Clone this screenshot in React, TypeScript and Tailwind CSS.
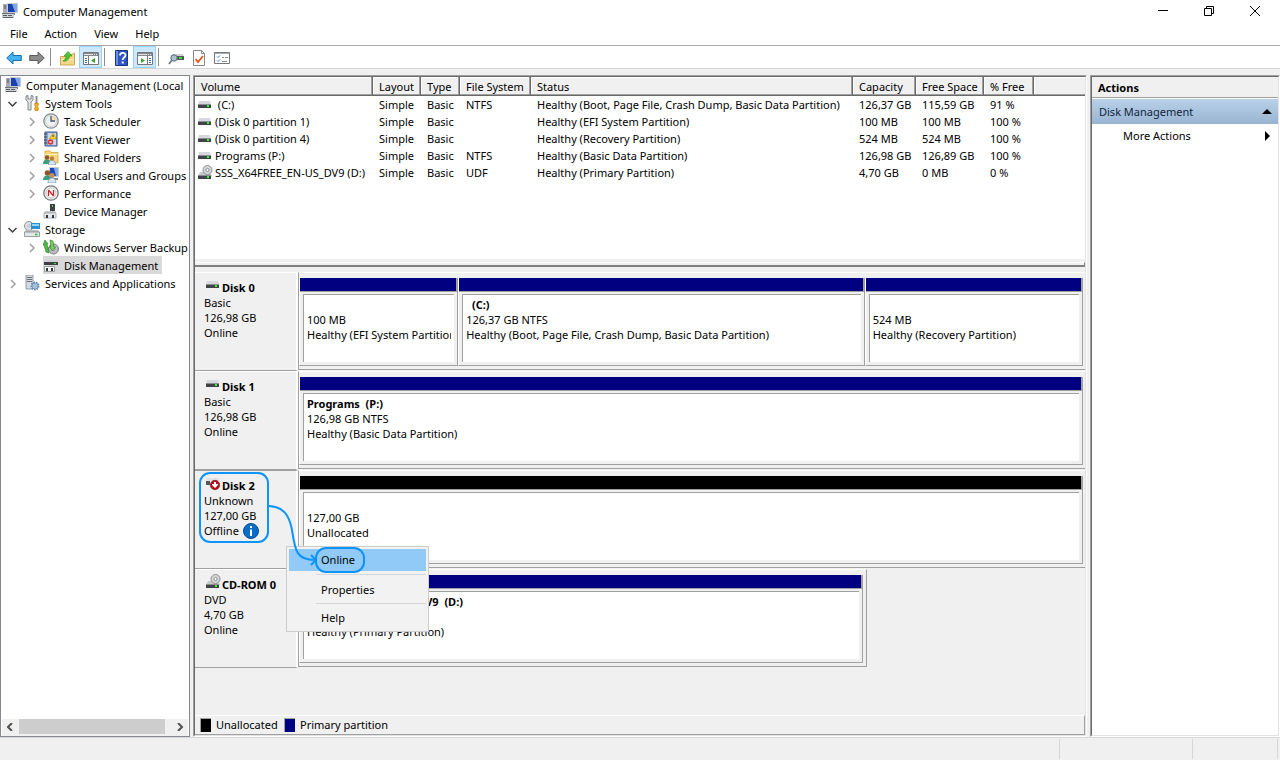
import { ReactNode } from "react"

type Kind = "drive" | "cd" | "offline"

interface IVolume {
    icon: Kind
    name: string
    fs: string
    status: string
    capacity: string
    free: string
    percent: string
}

interface IPartition {
    title?: string
    lines: string[]
    grow: number
    unallocated?: boolean
}

interface IDisk {
    icon: Kind
    name: string
    info: string[]
    partitions: IPartition[]
}

const volumes: IVolume[] = [
    { icon: "drive", name: " (C:)", fs: "NTFS", status: "Healthy (Boot, Page File, Crash Dump, Basic Data Partition)", capacity: "126,37 GB", free: "115,59 GB", percent: "91 %" },
    { icon: "drive", name: "(Disk 0 partition 1)", fs: "", status: "Healthy (EFI System Partition)", capacity: "100 MB", free: "100 MB", percent: "100 %" },
    { icon: "drive", name: "(Disk 0 partition 4)", fs: "", status: "Healthy (Recovery Partition)", capacity: "524 MB", free: "524 MB", percent: "100 %" },
    { icon: "drive", name: "Programs (P:)", fs: "NTFS", status: "Healthy (Basic Data Partition)", capacity: "126,98 GB", free: "126,89 GB", percent: "100 %" },
    { icon: "cd", name: "SSS_X64FREE_EN-US_DV9 (D:)", fs: "UDF", status: "Healthy (Primary Partition)", capacity: "4,70 GB", free: "0 MB", percent: "0 %" },
]

const disks: IDisk[] = [
    {
        icon: "drive",
        name: "Disk 0",
        info: ["Basic", "126,98 GB", "Online"],
        partitions: [
            { lines: ["100 MB", "Healthy (EFI System Partition)"], grow: 157 },
            { title: "  (C:)", lines: ["126,37 GB NTFS", "Healthy (Boot, Page File, Crash Dump, Basic Data Partition)"], grow: 404 },
            { lines: ["524 MB", "Healthy (Recovery Partition)"], grow: 216 },
        ],
    },
    {
        icon: "drive",
        name: "Disk 1",
        info: ["Basic", "126,98 GB", "Online"],
        partitions: [{ title: "Programs  (P:)", lines: ["126,98 GB NTFS", "Healthy (Basic Data Partition)"], grow: 1 }],
    },
    {
        icon: "offline",
        name: "Disk 2",
        info: ["Unknown", "127,00 GB", "Offline"],
        partitions: [{ lines: ["127,00 GB", "Unallocated"], grow: 1, unallocated: true }],
    },
    {
        icon: "cd",
        name: "CD-ROM 0",
        info: ["DVD", "4,70 GB", "Online"],
        partitions: [{ title: "SSS_X64FREE_EN-US_DV9  (D:)", lines: ["4,70 GB UDF", "Healthy (Primary Partition)"], grow: 1 }],
    },
]

function Svg({ children, size = "size-4" }: { children: ReactNode; size?: string }) {
    return (
        <svg viewBox="0 0 16 16" className={"shrink-0 " + size} aria-hidden="true">
            {children}
        </svg>
    )
}

function ComputerIcon() {
    return (
        <Svg>
            <path d="M5 0h11v10H5z" fill="#c9ccd2" />
            <path d="M6 1h9v8H6z" fill="#1b3fae" />
            <path d="M10 1h5v8h-2z" fill="#7fa6e8" />
            <path d="M1 1h4v9H1z" fill="#a9adb3" />
            <path d="M2 3h2M2 5h2" stroke="#4c5158" />
            <path d="M8 10h5v2H8z" fill="#7b8088" />
            <path d="M0 10h12v5H0z" fill="#cdd0d4" />
            <path d="M0 10h12v1H0z" fill="#6d7278" />
            <path d="M1 12.5h4M6 12.5h4M1 14.5h10" stroke="#585d63" />
        </Svg>
    )
}

function DriveIcon({ kind }: { kind: Kind }) {
    return (
        <Svg>
            {kind === "cd" && (
                <>
                    <path d="M2 7h10l2 4H0z" fill="#c6c9cc" />
                    <circle cx="9.5" cy="5" r="4.5" fill="#d5d7d8" stroke="#8e9294" />
                    <circle cx="9.5" cy="5" r="1.6" fill="#fff" stroke="#8e9294" />
                    <path d="M0 10h13v4H0z" fill="#3f4347" />
                    <path d="M0 10.500h13" stroke="#8b8f93" />
                    <path d="M9 12h2" stroke="#3bf03b" strokeWidth="2" />
                </>
            )}
            {kind === "drive" && (
                <>
                    <path d="M1 4h11l1 4H0z" fill="#d6d8dd" />
                    <path d="M0 7h13v4H0z" fill="#3f4347" />
                    <path d="M0 7.500h13" stroke="#8b8f93" />
                    <path d="M9 9h2" stroke="#3bf03b" strokeWidth="2" />
                </>
            )}
            {kind === "offline" && (
                <>
                    <path d="M0 3h13v3H0z" fill="#e0e2e5" />
                    <path d="M0 6h4v4H0z" fill="#55595c" />
                    <circle cx="9" cy="10" r="4.700" fill="#b1101c" stroke="#7d0710" strokeWidth=".6" />
                    <path d="M8 7h2v2h2v1l-3 3-3-3V9h2z" fill="#fff" />
                </>
            )}
        </Svg>
    )
}

function ToolsIcon() {
    return (
        <Svg>
            <path d="M2 1v4l2 2v8h3V7l2-2V1L7 .5V4H4V.5z" fill="#e2e4e6" stroke="#777b80" strokeWidth=".9" />
            <path d="M11.500 1h2v7h-2z" fill="#8b9095" />
            <path d="M11 8h3l.5 2-1 1 1 3-1 2h-2l-1-2 1-3-1-1z" fill="#f2b01c" stroke="#a87408" strokeWidth=".6" />
        </Svg>
    )
}

function ClockIcon() {
    return (
        <Svg>
            <circle cx="8" cy="8" r="7.200" fill="#eef0f2" stroke="#8a8d90" strokeWidth="1.300" />
            <path d="M8 8V2.500A5.500 5.500 0 0 1 13.500 8z" fill="#f5dfa5" />
            <circle cx="8" cy="8" r="5.500" fill="none" stroke="#c0c5ca" strokeWidth=".7" />
            <path d="M8 3v5h4" fill="none" stroke="#3c5b80" strokeWidth="1.300" />
        </Svg>
    )
}

function EventIcon() {
    return (
        <Svg>
            <path d="M2 1h12v14H2z" fill="#8aa8d6" stroke="#41598a" />
            <path d="M5 2h8v12H5z" fill="#c7d8f0" />
            <path d="M1 3h3M1 6h3M1 9h3M1 12h3" stroke="#444" />
            <path d="M10 2l3.500 6h-7z" fill="#ffdc20" stroke="#b48a00" strokeWidth=".6" />
            <path d="M10 4v2" stroke="#333" />
            <circle cx="7.500" cy="11" r="2.800" fill="#d93640" />
            <path d="M6.500 10l2 2M8.500 10l-2 2" stroke="#fff" strokeWidth=".8" />
        </Svg>
    )
}

function SharedIcon() {
    return (
        <Svg>
            <path d="M2 2h5l1 1.500h7V14H2z" fill="#f8d777" stroke="#c99b35" strokeWidth=".7" />
            <path d="M2 5.500h13" stroke="#fff0b5" />
            <circle cx="4" cy="8.500" r="2.200" fill="#8a5a2c" />
            <path d="M0 15c0-3 1.500-4.500 4-4.500S8 12 8 15z" fill="#3b9d7c" />
            <circle cx="9" cy="9.500" r="2.200" fill="#b67c4a" />
            <path d="M5.500 16c0-3 1.200-4.500 3.500-4.500s3.500 1.500 3.500 4.500z" fill="#d9e6f5" stroke="#5b7fb0" strokeWidth=".6" />
        </Svg>
    )
}

function UsersIcon() {
    return (
        <Svg>
            <path d="M6 0h10v10H6z" fill="#c9ccd2" />
            <path d="M7 1h8v8H7z" fill="#1b4bb8" />
            <path d="M11 1h4v8h-2z" fill="#86adeb" />
            <path d="M11 11h4v2h-4z" fill="#888" />
            <circle cx="4.500" cy="6" r="2.800" fill="#8a5a2c" />
            <path d="M0 13c0-3 1.500-4.500 4.500-4.500S9 10 9 13z" fill="#3b9d7c" />
            <circle cx="9" cy="8.500" r="2.500" fill="#c48d5c" />
            <path d="M5 16c0-3.500 1.200-5 4-5s4 1.500 4 5z" fill="#d9e6f5" stroke="#5b7fb0" strokeWidth=".6" />
        </Svg>
    )
}

function PerformanceIcon() {
    return (
        <Svg>
            <circle cx="8" cy="8" r="7.200" fill="#f4f4f4" stroke="#77797b" strokeWidth="1.300" />
            <circle cx="8" cy="8" r="5" fill="#fff" stroke="#aaa" strokeWidth=".7" />
            <path d="M5.500 11V5.500M10.500 10.500V5M5.500 5l5 6" stroke="#d0202a" strokeWidth="1.300" />
        </Svg>
    )
}

function DeviceIcon() {
    return (
        <Svg>
            <path d="M7 1h5v8H7z" fill="#3d4145" />
            <path d="M9.500 2v2" stroke="#42e042" />
            <path d="M2 8h10l1 2H1z" fill="#c7cacd" />
            <path d="M1 10h12v5H1z" fill="#e8eaeb" stroke="#9a9da0" strokeWidth=".8" />
            <path d="M3 12h2v3H3zM9 12h2v3H9z" fill="#33363a" />
        </Svg>
    )
}

function StorageIcon() {
    return (
        <Svg>
            <circle cx="5" cy="5" r="4.500" fill="#dfe2e4" stroke="#8e9294" />
            <circle cx="5" cy="5" r="1.300" fill="#fff" stroke="#999" strokeWidth=".7" />
            <path d="M7 2h9v6H7z" fill="#2b8fd0" />
            <path d="M8 3h7v2H8z" fill="#8fd3f5" />
            <path d="M2 9h12l1.500 2h-15z" fill="#b9bcbf" />
            <path d="M.5 11h15v4.500H.5z" fill="#e3e5e6" stroke="#85898c" strokeWidth=".8" />
            <path d="M11 13.500h2.500" stroke="#25c025" strokeWidth="1.500" />
        </Svg>
    )
}

function BackupIcon() {
    return (
        <Svg>
            <circle cx="10.500" cy="10" r="5" fill="#b9bcc2" stroke="#777a80" />
            <circle cx="10.500" cy="10" r="1.500" fill="#f1f1f1" stroke="#777" strokeWidth=".6" />
            <path d="M3 13L1 6 0 6l2-5 3 4H4l2 9z" fill="#4fbb45" stroke="#257a20" strokeWidth=".6" />
            <path d="M7 1l3 1 1 6h1.500l-3 4-3-4H8z" fill="#76d060" stroke="#257a20" strokeWidth=".6" />
        </Svg>
    )
}

function DiskMgmtIcon() {
    return (
        <Svg>
            <path d="M2 3h12l1 2H1z" fill="#cfd1d4" />
            <path d="M1 5h14v3H1z" fill="#3d4145" />
            <path d="M11 6.500h2" stroke="#42e042" />
            <path d="M1.500 9.500h10v5h-10z" fill="#f6f7f8" stroke="#9a9da0" />
            <path d="M3 11h2v3H3zM8 11h2v3H8z" fill="#33363a" />
        </Svg>
    )
}

function ServicesIcon() {
    return (
        <Svg>
            <path d="M2 0h7v14H2z" fill="#d5dbe1" stroke="#7d8791" strokeWidth=".8" />
            <path d="M3 2.500h5M3 4.500h5M3 6.500h5" stroke="#65707b" />
            <circle cx="11" cy="11" r="3.600" fill="#b7d0e8" stroke="#5c86b0" strokeWidth="1.800" strokeDasharray="1.500 1" />
            <circle cx="11" cy="11" r="3" fill="#b7d0e8" stroke="#5c86b0" strokeWidth=".7" />
            <circle cx="11" cy="11" r="1.200" fill="#fff" stroke="#5c86b0" strokeWidth=".7" />
        </Svg>
    )
}

function ArrowIcon({ back }: { back?: boolean }) {
    return (
        <Svg>
            {back ? (
                <path d="M.7 8L7 2v3.500h8.300v5H7V14z" fill="#43b2ee" stroke="#1b6fae" />
            ) : (
                <path d="M15.300 8L9 2v3.500H.7v5H9V14z" fill="#8b8b8b" stroke="#5c5c5c" />
            )}
        </Svg>
    )
}

function FolderUpIcon() {
    return (
        <Svg>
            <path d="M.500 6.500h5l1-2h6l1-1.500h1v12H.500z" fill="#f4d789" stroke="#c7a04c" strokeWidth=".9" />
            <path d="M1 9.500h13" stroke="#fbe9b5" />
            <path d="M3 11c2-1 3-3 3-5H4l4-4.500L12 6H9.500c0 3-3 6-6.500 5z" fill="#4fc332" stroke="#2c8f20" strokeWidth=".6" />
        </Svg>
    )
}

function PaneIcon({ flip }: { flip?: boolean }) {
    return (
        <Svg>
            <path d="M.5 2.500h15v12H.5z" fill="#fff" stroke="#75787b" />
            <path d="M1 3h14v3H1z" fill="#85898c" />
            <path d="M1 4.500h9M11 4.500h1M13 4.500h1" stroke="#e5e5e5" />
            {flip ? (
                <>
                    <path d="M10.500 6v8.500" stroke="#75787b" />
                    <path d="M12 8.500h2M12 10.500h2M12 12.500h2" stroke="#3f6e9c" />
                    <path d="M4 8v5l4-2.500z" fill="#3da32c" />
                </>
            ) : (
                <>
                    <path d="M5.500 6v8.500" stroke="#75787b" />
                    <path d="M2 8.500h2M2 10.500h2M2 12.500h2" stroke="#3f6e9c" />
                    <path d="M12 8v5l-4-2.500z" fill="#3da32c" />
                </>
            )}
        </Svg>
    )
}

function HelpIcon() {
    return (
        <Svg>
            <path d="M1.500.5h12v15h-12z" fill="#2d55c2" stroke="#1b3585" />
            <path d="M2 1h2v14H2z" fill="#6f8fe0" />
            <path d="M6 5.500C6 2 11.500 2 11.500 5.200c0 2.300-2.800 2.300-2.800 4.800" fill="none" stroke="#fff" strokeWidth="1.800" />
            <path d="M7.700 11.500h2v2h-2z" fill="#fff" />
        </Svg>
    )
}

function InspectIcon() {
    return (
        <Svg>
            <path d="M4 4h11l1 3H3z" fill="#d0d2d5" />
            <path d="M3 6h13v4H3z" fill="#54585c" />
            <path d="M11 8h3" stroke="#38e038" strokeWidth="2" />
            <path d="M4 10L1 14" stroke="#777b80" strokeWidth="1.800" />
            <circle cx="6" cy="8" r="3.200" fill="#a9c0cf" stroke="#5f6a73" />
        </Svg>
    )
}

function CheckDocIcon() {
    return (
        <Svg>
            <path d="M2.500.5h8l3 3v12h-11z" fill="#fff" stroke="#85888b" />
            <path d="M10.500.5v3h3" fill="none" stroke="#85888b" />
            <path d="M4.500 9l2.500 3 5-6" fill="none" stroke="#e8541d" strokeWidth="1.800" />
        </Svg>
    )
}

function ListIcon() {
    return (
        <Svg>
            <path d="M.5 2.500h15v11H.5z" fill="#fff" stroke="#75787b" />
            <path d="M1 3.500h14" stroke="#a9acaf" />
            <path d="M3 6.500l1 1 2-2M3 10.500l1 1 2-2" fill="none" stroke="#2f7fd0" />
            <path d="M8 7.500h2M11 7.500h3M8 11.500h5" stroke="#8a8d90" />
        </Svg>
    )
}

function Chevron({ open }: { open?: boolean }) {
    return (
        <svg viewBox="0 0 11 11" className="size-[11px] shrink-0" fill="none" strokeWidth="1.500" aria-hidden="true">
            {open ? <path d="M1.500 4l4 4 4-4" stroke="#404040" /> : <path d="M4 2l4 4-4 4" stroke="#a0a0a0" />}
        </svg>
    )
}

const tree: { label: string; icon: ReactNode; level: number; state?: "open" | "closed"; selected?: boolean }[] = [
    { label: "System Tools", icon: <ToolsIcon />, level: 1, state: "open" },
    { label: "Task Scheduler", icon: <ClockIcon />, level: 2, state: "closed" },
    { label: "Event Viewer", icon: <EventIcon />, level: 2, state: "closed" },
    { label: "Shared Folders", icon: <SharedIcon />, level: 2, state: "closed" },
    { label: "Local Users and Groups", icon: <UsersIcon />, level: 2, state: "closed" },
    { label: "Performance", icon: <PerformanceIcon />, level: 2, state: "closed" },
    { label: "Device Manager", icon: <DeviceIcon />, level: 2 },
    { label: "Storage", icon: <StorageIcon />, level: 1, state: "open" },
    { label: "Windows Server Backup", icon: <BackupIcon />, level: 2, state: "closed" },
    { label: "Disk Management", icon: <DiskMgmtIcon />, level: 2, selected: true },
    { label: "Services and Applications", icon: <ServicesIcon />, level: 1, state: "closed" },
]

function Sunken({ children, className }: { children: ReactNode; className: string }) {
    return (
        <div className={"flex border border-t-[#a0a0a0] border-l-[#a0a0a0] border-r-white border-b-white " + className}>
            <div className="flex min-w-0 flex-1 flex-col border border-t-[#696969] border-l-[#696969] border-r-[#e3e3e3] border-b-[#e3e3e3]">
                {children}
            </div>
        </div>
    )
}

function TitleBar() {
    return (
        <header className="flex h-6 items-center bg-white pb-0.5 pl-0.5">
            <ComputerIcon />
            <h1 className="flex-1 pl-[5px]">Computer Management</h1>
            <div className="flex pr-0.5">
                <button aria-label="Minimize" className="flex h-5 w-[46px] items-center justify-center">
                    <svg viewBox="0 0 10 10" className="size-2.5" stroke="#000"><path d="M0 4.500h10" /></svg>
                </button>
                <button aria-label="Restore" className="flex h-5 w-[46px] items-center justify-center">
                    <svg viewBox="0 0 10 10" className="size-2.5" fill="none" stroke="#000"><path d="M.5 2.500h7v7h-7zM2.500 2.500v-2h7v7h-2" /></svg>
                </button>
                <button aria-label="Close" className="flex h-5 w-[46px] items-center justify-center">
                    <svg viewBox="0 0 10 10" className="size-2.5" stroke="#000"><path d="M0 0l10 10M10 0L0 10" /></svg>
                </button>
            </div>
        </header>
    )
}

function ToolButton({ label, on, children }: { label: string; on?: boolean; children: ReactNode }) {
    return (
        <button
            aria-label={label}
            className={"flex h-[22px] w-[23px] items-center justify-center border pt-0.5 " + (on ? "border-[#99d1ff] bg-[#cce8ff]" : "border-transparent")}
        >
            {children}
        </button>
    )
}

function Separator() {
    return <div className="mr-[5px] ml-0.5 h-[18px] w-px bg-[#8d8d8d]"></div>
}

function Toolbar() {
    return (
        <div className="flex h-6 items-center border-y border-t-[#a8a8ae] border-b-[#d5d5d5] bg-white pl-0.5">
            <ToolButton label="Back"><ArrowIcon back /></ToolButton>
            <ToolButton label="Forward"><ArrowIcon /></ToolButton>
            <Separator />
            <ToolButton label="Up One Level"><FolderUpIcon /></ToolButton>
            <ToolButton label="Show/Hide Console Tree" on><PaneIcon /></ToolButton>
            <Separator />
            <ToolButton label="Help"><HelpIcon /></ToolButton>
            <ToolButton label="Show/Hide Action Pane" on><PaneIcon flip /></ToolButton>
            <Separator />
            <ToolButton label="Rescan Disks"><InspectIcon /></ToolButton>
            <ToolButton label="Properties"><CheckDocIcon /></ToolButton>
            <ToolButton label="Settings"><ListIcon /></ToolButton>
        </div>
    )
}

function Tree() {
    return (
        <aside className="flex w-[190px] shrink-0 flex-col border border-[#828790] bg-white px-px">
            <ul className="flex-1 overflow-hidden whitespace-nowrap">
                <li className="flex h-[18px] items-center pl-[3px]">
                    <ComputerIcon />
                    <span className="pl-[5px]">Computer Management (Local</span>
                </li>
                {tree.map((item) => (
                    <li key={item.label} className={"flex h-[18px] items-center " + (item.level === 1 ? "pl-[5px]" : "pl-6")}>
                        <span className="w-[17px] shrink-0">{item.state && <Chevron open={item.state === "open"} />}</span>
                        <button className={"flex h-[18px] items-center " + (item.selected ? "bg-[#d9d9d9]" : "")}>
                            {item.icon}
                            <span className="pr-1 pl-[5px]">{item.label}</span>
                        </button>
                    </li>
                ))}
            </ul>
            <div className="flex h-[17px] bg-[#f0f0f0] pb-0.5">
                <button aria-label="Scroll left" className="flex w-[17px] items-center justify-center">
                    <svg viewBox="0 0 8 8" className="size-2" fill="none" stroke="#505050" strokeWidth="2"><path d="M5 0L1 4l4 4" /></svg>
                </button>
                <div className="flex-1 pr-1.5"><div className="h-full bg-[#cdcdcd]"></div></div>
                <button aria-label="Scroll right" className="flex w-[17px] items-center justify-center">
                    <svg viewBox="0 0 8 8" className="size-2" fill="none" stroke="#505050" strokeWidth="2"><path d="M2 0l4 4-4 4" /></svg>
                </button>
            </div>
        </aside>
    )
}

function VolumeTable() {
    return (
        <div className="h-[182px] shrink-0 overflow-hidden bg-white">
            <table className="w-full table-fixed border-separate border-spacing-0 whitespace-nowrap">
                <colgroup>
                    <col className="w-[178px]" />
                    <col className="w-12" />
                    <col className="w-[39px]" />
                    <col className="w-[71px]" />
                    <col className="w-[322px]" />
                    <col className="w-[63px]" />
                    <col className="w-[68px]" />
                    <col className="w-[50px]" />
                    <col />
                </colgroup>
                <thead>
                    <tr className="h-[19px] bg-[#f0f0f0] text-left">
                        {["Volume", "Layout", "Type", "File System", "Status", "Capacity", "Free Space", "% Free"].map((head) => (
                            <th key={head} className="border-r border-b border-[#696969] p-0 pl-1.5 font-normal shadow-[inset_-1px_-1px_#a0a0a0,inset_1px_1px_#ffffff]">
                                {head}
                            </th>
                        ))}
                        <td className="border-b border-[#696969] p-0 shadow-[inset_0_-1px_#a0a0a0,inset_1px_1px_#ffffff]"></td>
                    </tr>
                </thead>
                <tbody>
                    {volumes.map((v) => (
                        <tr key={v.name} className="h-[17px]">
                            <td className="p-0 pl-[3px]">
                                <div className="flex h-[17px] items-center">
                                    <DriveIcon kind={v.icon} />
                                    <span className="whitespace-pre pl-px">{v.name}</span>
                                </div>
                            </td>
                            <td className="p-0 pl-1.5">Simple</td>
                            <td className="p-0 pl-1.5">Basic</td>
                            <td className="p-0 pl-1.5">{v.fs}</td>
                            <td className="p-0 pl-1.5">{v.status}</td>
                            <td className="p-0 pl-1.5">{v.capacity}</td>
                            <td className="p-0 pl-1.5">{v.free}</td>
                            <td className="p-0 pl-1.5">{v.percent}</td>
                            <td></td>
                        </tr>
                    ))}
                </tbody>
            </table>
        </div>
    )
}

function Partition({ part }: { part: IPartition }) {
    return (
        <div className="flex min-w-0 basis-0 flex-col border-r border-b border-l border-r-[#a0a0a0] border-b-[#a0a0a0] border-l-white" style={{ flexGrow: part.grow }}>
            <div className={"h-3.5 border-r border-b border-[#a0a0a0] " + (part.unallocated ? "bg-black" : "bg-[#000080]")}></div>
            <div className="mx-[3px] mt-0.5 mb-[3px] flex-1 overflow-hidden border-t border-l border-[#a0a0a0] bg-white pt-0.5 pl-[3px] whitespace-pre">
                <p className="h-[15px] font-bold">{part.title}</p>
                {part.lines.map((line) => <p key={line} className="mr-[3px] overflow-hidden">{line}</p>)}
            </div>
        </div>
    )
}

function ContextMenu() {
    return (
        <div role="menu" className="absolute top-[76px] left-[91px] z-10 flex w-[143px] flex-col border border-[#cccccc] bg-[#f2f2f2] p-px">
            <button role="menuitem" className="mx-px mt-px h-[22px] bg-[#91c9f7] pb-0.5 pl-8 text-left">Online</button>
            <div className="mt-[3px] mr-px ml-7 h-px bg-[#d7d7d7]"></div>
            <button role="menuitem" className="h-7 pl-[33px] text-left">Properties</button>
            <div className="mr-px ml-7 h-px bg-[#d7d7d7]"></div>
            <button role="menuitem" className="h-[26px] pl-[33px] text-left">Help</button>
        </div>
    )
}

// blue frames and the arrow that leads from the disk to the menu entry
function Callout() {
    return (
        <svg viewBox="0 0 180 110" className="pointer-events-none absolute top-0 left-0 z-20 h-[110px] w-[180px]" fill="none" stroke="#0c94fa" strokeWidth="2" aria-hidden="true">
            <rect x="5" y="3" width="68" height="69" rx="10" />
            <rect x="121" y="78" width="48" height="24" rx="10" />
            <path d="M74 36C88 37 94 44 97 60C100 80 101 90 120 90" />
            <path d="M116 85l5 5-5 5" />
        </svg>
    )
}

function DiskRow({ disk }: { disk: IDisk }) {
    const selected = disk.icon === "offline"
    const short = disk.icon === "cd"
    return (
        <div className="relative flex h-[99px] shrink-0">
            <div className={"w-[103px] shrink-0 border-t border-r-2 border-b border-r-white border-b-[#a0a0a0] pt-1 pl-[9px] " + (selected ? "border-t-[#a0a0a0]" : "border-t-white")}>
                <div className="flex h-[18px] items-start pl-0.5">
                    <DriveIcon kind={disk.icon} />
                    <h2 className="self-end font-bold whitespace-nowrap">{disk.name}</h2>
                </div>
                {disk.info.map((line) => (
                    <p key={line} className="flex h-[15px] items-center">
                        {line}
                        {line === "Offline" && (
                            <svg viewBox="0 0 16 16" className="ml-1 size-4" aria-hidden="true">
                                <circle cx="8" cy="8" r="7.500" fill="#0a6cc8" stroke="#064c96" />
                                <path d="M7 3h2v2H7zM7 6.500h2V13H7z" fill="#fff" />
                            </svg>
                        )}
                    </p>
                ))}
            </div>
            <div className={"mb-px flex min-w-0 basis-0 border-t border-b border-l border-t-white border-b-[#a0a0a0] border-l-[#a0a0a0] pt-[5px] pb-[3px] " + (short ? "border-r border-r-[#a0a0a0] pr-[3px]" : "pr-0.5")} style={{ flexGrow: short ? 564 : 787 }}>
                {disk.partitions.map((part, i) => <Partition key={i} part={part} />)}
            </div>
            {short && <div className="basis-0" style={{ flexGrow: 218 }}></div>}
            {selected && <ContextMenu />}
            {selected && <Callout />}
        </div>
    )
}

function Legend() {
    return (
        <footer className="flex h-5 items-center border-t border-r border-b border-t-white border-r-[#a0a0a0] border-b-[#a0a0a0] pb-px pl-[5px]">
            <span className="h-3.5 w-[11px] border-t border-l border-[#a0a0a0] bg-black"></span>
            <span className="w-[73px] pl-[5px]">Unallocated</span>
            <span className="h-3.5 w-[11px] border-t border-l border-[#a0a0a0] bg-[#000080]"></span>
            <span className="pl-[5px]">Primary partition</span>
        </footer>
    )
}

function Actions() {
    return (
        <Sunken className="w-[190px] shrink-0 bg-white">
            <h2 className="flex h-[21px] items-center border-b border-[#a0a0a0] bg-[#f0f0f0] pl-1.5 font-bold">Actions</h2>
            <button className="mt-px flex h-[25px] items-center justify-between bg-linear-to-b from-[#b9d1ea] to-[#99b4d1] pr-1.5 pl-[7px] text-[#10243e]">
                Disk Management
                <svg viewBox="0 0 10 5" className="h-[5px] w-2.5" fill="#000"><path d="M0 5l5-5 5 5z" /></svg>
            </button>
            <button className="flex h-[23px] items-center justify-between pr-2 pl-[31px]">
                More Actions
                <svg viewBox="0 0 5 10" className="h-2.5 w-[5px]" fill="#000"><path d="M0 0l5 5-5 5z" /></svg>
            </button>
        </Sunken>
    )
}

function App() {
    return (
        <div className="flex min-h-screen flex-col bg-[#f0f0f0] font-['Noto_Sans',sans-serif] text-[11px] leading-[15px] text-black">
            <TitleBar />
            <nav className="flex h-[21px] items-center gap-px bg-white pb-0.5 pl-0.5">
                {["File", "Action", "View", "Help"].map((name) => (
                    <button key={name} className="px-2">{name}</button>
                ))}
            </nav>
            <Toolbar />
            <main className="flex flex-1 gap-[3px] pt-1.5">
                <Tree />
                <Sunken className="min-w-0 flex-1">
                    <VolumeTable />
                    <div className="h-2 shrink-0 pt-[3px]">
                        <div className="h-[5px] border-t border-r border-b-2 border-t-white border-r-[#808080] border-b-[#808080]"></div>
                    </div>
                    <div className="flex-1 pt-[5px]">
                        {disks.map((disk) => <DiskRow key={disk.name} disk={disk} />)}
                    </div>
                    <Legend />
                </Sunken>
                <Actions />
            </main>
            <div className="flex h-[23px] justify-end border-t border-[#d7d7d7] py-px pr-0.5">
                <div className="w-[133px] border-l border-[#d7d7d7]"></div>
                <div className="w-[86px] border-x border-[#d7d7d7]"></div>
            </div>
        </div>
    )
}

export default App
